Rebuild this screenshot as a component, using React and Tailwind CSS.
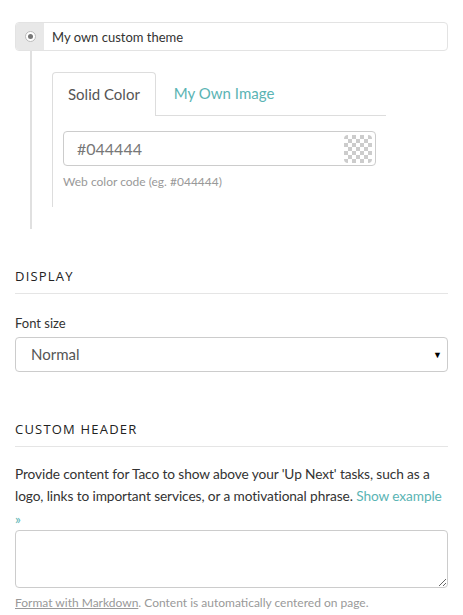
import React from "react";

const body = { fontFamily: "Lato, 'Noto Sans', sans-serif" };

const Checker = () => (
  <svg width="28" height="28" viewBox="0 0 28 28" className="rounded-sm">
    <rect width="28" height="28" fill="#ffffff" />
    {Array.from({ length: 49 }).map((_, i) => {
      const r = Math.floor(i / 7);
      const c = i % 7;
      return (r + c) % 2 === 0 ? (
        <rect key={i} x={c * 4} y={r * 4} width="4" height="4" fill="#cccccc" />
      ) : null;
    })}
  </svg>
);

export default function App() {
  return (
    <div className="w-[463px] bg-white text-[#333]" style={body}>
      {/* theme option */}
      <div className="px-[15px] pt-[22px]">
        <div className="flex h-[29px] rounded border border-[#e3e3e3] overflow-hidden">
          <div className="w-[28px] bg-[#e8e8e8] flex items-center justify-center">
            <span className="w-[11px] h-[11px] rounded-full border border-[#bbb] bg-white flex items-center justify-center">
              <span className="w-[5px] h-[5px] rounded-full bg-[#777]" />
            </span>
          </div>
          <div className="flex items-center pl-[8px] pt-[3px] text-[13px] text-[#333]">My own custom theme</div>
        </div>

        <div className="ml-[15px] border-l-2 border-[#e0e0e0] pl-[20px] pt-[21px] pb-[22px]">
          {/* tabs */}
          <div className="flex w-[334px] border-b border-[#ddd] h-[44px]">
            <div className="px-[15px] flex items-center rounded-t border border-b-0 border-[#ddd] bg-white text-[15px] text-[#555] -mb-px">
              Solid Color
            </div>
            <div className="pl-[18px] flex items-center text-[15px] text-[#5ab4b4]">My Own Image</div>
          </div>
          <div className="border-l border-[#ddd] pl-[10px] pt-[15px] pb-[16px]">
            <div className="w-[313px] h-[35px] rounded border border-[#ccc] flex items-center justify-between pl-[13px] pr-[3px]">
              <span className="text-[16px] text-[#777]">#044444</span>
              <Checker />
            </div>
            <div className="mt-[7px] text-[12px] text-[#999]">Web color code (eg. #044444)</div>
          </div>
        </div>
      </div>

      {/* display */}
      <div className="px-[15px] pt-[38px]">
        <h3 className="text-[13px] tracking-[1.2px] text-[#222] pb-[6px] border-b border-[#e5e5e5]" style={{ fontFamily: "'Open Sans', sans-serif" }}>
          DISPLAY
        </h3>
        <div className="mt-[20px] text-[13px] text-[#333]">Font size</div>
        <div className="mt-[4px] h-[35px] rounded border border-[#ccc] flex items-center justify-between pl-[15px] pr-[5px]">
          <span className="text-[15px] text-[#555]">Normal</span>
          <span className="text-[9px] text-black">▼</span>
        </div>
      </div>

      {/* custom header */}
      <div className="px-[15px] pt-[48px]">
        <h3 className="text-[13px] tracking-[1.2px] text-[#222] pb-[6px] border-b border-[#e5e5e5]" style={{ fontFamily: "'Open Sans', sans-serif" }}>
          CUSTOM HEADER
        </h3>
        <p className="mt-[16px] text-[13.7px] tracking-[-0.1px] leading-[22.5px] text-[#333]">
          Provide content for Taco to show above your 'Up Next' tasks, such as a logo, links to important services, or a motivational phrase.{" "}
          <a className="text-[#5ab4b4]">Show example »</a>
        </p>
        <textarea className="mt-0 block w-full h-[58px] rounded border border-[#ccc] resize-y" />
        <div className="mt-[6px] text-[12px] text-[#999]">
          <span className="underline">Format with Markdown</span>. Content is automatically centered on page.
        </div>
      </div>
    </div>
  );
}
